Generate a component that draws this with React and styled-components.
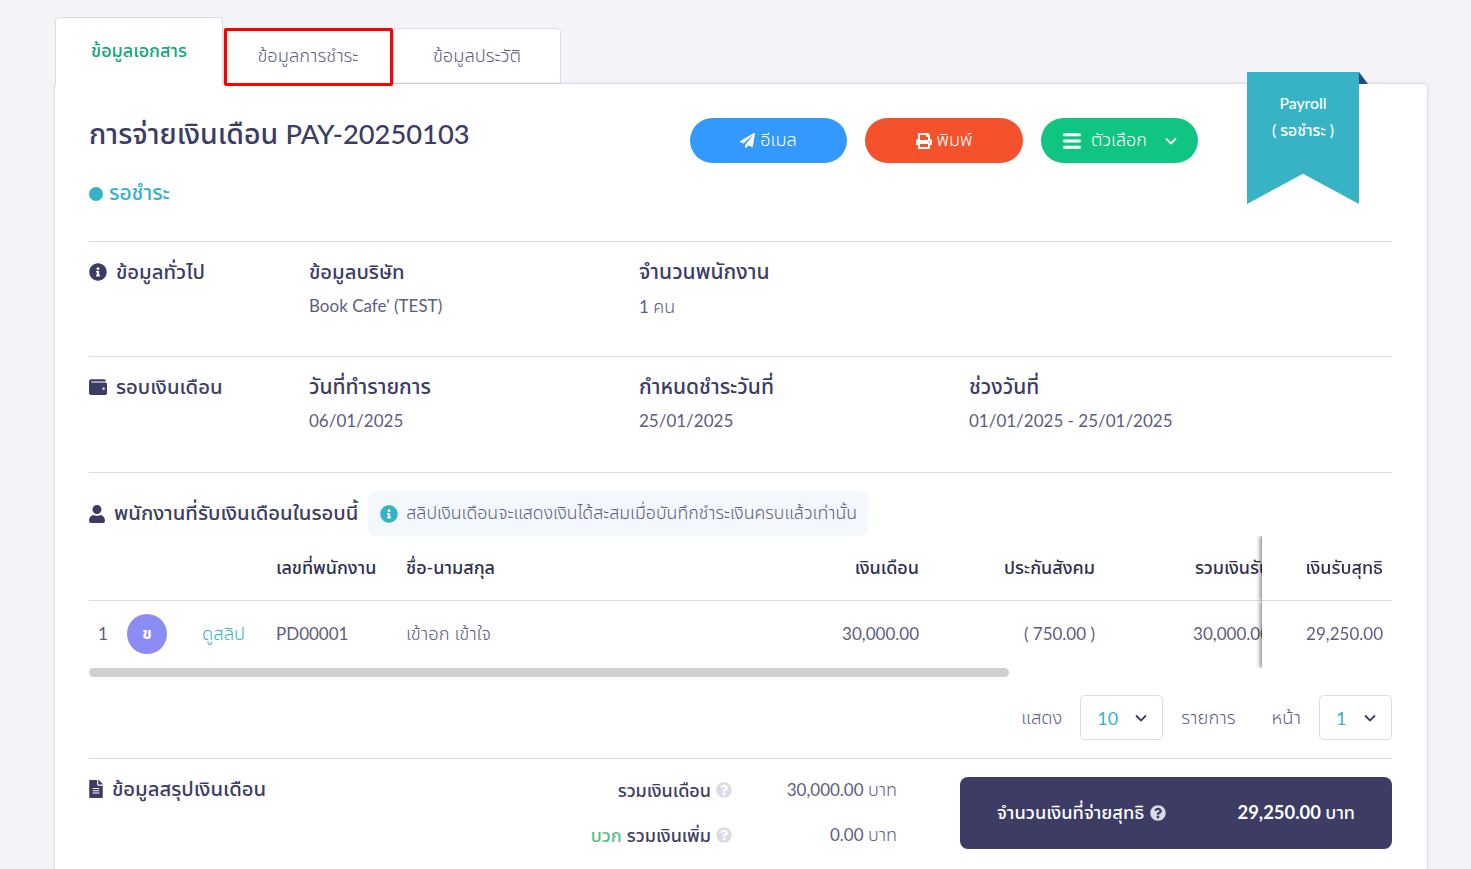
import React from "react";
import styled, { createGlobalStyle } from "styled-components";
import {
  FaPaperPlane,
  FaPrint,
  FaBars,
  FaInfoCircle,
  FaWallet,
  FaUser,
  FaFileAlt,
  FaQuestionCircle,
} from "react-icons/fa";

const navy = "#3c3c64";
const muted = "#5d5d80";
const teal = "#37b3c5";
const line = "#dcdce8";

const GlobalStyle = createGlobalStyle`
  html, body {
    margin: 0;
    height: 100%;
    overflow: hidden;
    background: #f3f3f8;
    font-family: "Lato", "Noto Sans Thai", "Noto Sans", sans-serif;
    color: ${navy};
  }
  * { box-sizing: border-box; }
`;

const Page = styled.div`
  height: 869px;
  overflow: hidden;
  padding: 17px 44px 0 55px;
`;

const Tabs = styled.div`
  display: flex;
  align-items: flex-end;
  height: 67px;
`;

const Tab = styled.div`
  display: flex;
  justify-content: center;
  align-items: ${(p) => (p.$active ? "flex-start" : "center")};
  width: ${(p) => p.$width}px;
  height: ${(p) => (p.$active ? 68 : 56)}px;
  padding-top: ${(p) => (p.$active ? 20 : 0)}px;
  margin-bottom: ${(p) => (p.$active ? -1 : 0)}px;
  position: relative;
  z-index: ${(p) => (p.$active || p.$marked ? 2 : 0)};
  background: #fff;
  border: 1px solid ${line};
  border-bottom: ${(p) => (p.$active ? "none" : `1px solid ${line}`)};
  border-radius: 4px 4px 0 0;
  font-size: ${(p) => (p.$active ? 18 : 18.3)}px;
  font-weight: ${(p) => (p.$active ? 500 : 300)};
  color: ${(p) => (p.$active ? "#12a67c" : muted)};
`;

const Marker = styled.div`
  position: absolute;
  inset: -1px -1px -3px 0;
  border: 3px solid #fa0000;
  border-radius: 2px;
`;

const Card = styled.div`
  position: relative;
  background: #fff;
  border-radius: 4px;
  box-shadow: 0 0 3px rgba(60, 60, 100, 0.3);
  padding: 32px 35px 0 34px;
  min-height: 800px;
`;

const Ribbon = styled.div`
  position: absolute;
  top: -12px;
  right: 68px;
  width: 112px;
  height: 132px;
  padding-top: 17px;
  background: ${teal};
  clip-path: polygon(0 0, 100% 0, 100% 100%, 50% 77%, 0 100%);
  color: #fff;
  font-size: 15.75px;
  font-weight: 500;
  text-align: center;
  line-height: 27px;
`;

const RibbonFold = styled.div`
  position: absolute;
  top: -12px;
  right: 59px;
  width: 0;
  height: 0;
  border-bottom: 12px solid #1d4e89;
  border-right: 9px solid transparent;
`;

const Header = styled.div`
  display: flex;
  justify-content: space-between;
  align-items: flex-start;
  height: 126px;
  border-bottom: 1px solid ${line};
`;

const Title = styled.h1`
  margin: -1px 0 0;
  font-size: 28.5px;
  line-height: 36px;
  font-weight: 500;
  color: ${navy};
`;

const TitleCode = styled.span`
  font-size: 27.3px;
`;

const Status = styled.div`
  display: flex;
  align-items: center;
  gap: 6px;
  margin-top: 26px;
  font-size: 21px;
  font-weight: 500;
  color: ${teal};
`;

const Dot = styled.span`
  width: 14px;
  height: 14px;
  border-radius: 50%;
  background: ${teal};
`;

const Actions = styled.div`
  display: flex;
  gap: 18px;
  margin: 2px 194px 0 0;
`;

const ActionButton = styled.button`
  display: flex;
  align-items: center;
  justify-content: center;
  gap: ${(p) => p.$gap || 5}px;
  width: ${(p) => p.$width || 157}px;
  height: 45px;
  border: 0;
  border-radius: 23px;
  background: ${(p) => p.$bg};
  color: #fff;
  font: inherit;
  font-size: 18px;
  font-weight: 300;
`;

const ButtonChevron = styled.span`
  display: flex;
  margin-left: 9px;
`;

const SectionTitle = styled.div`
  display: flex;
  align-items: center;
  gap: 9px;
  height: 28px;
  font-size: 20.3px;
  font-weight: 500;
  white-space: nowrap;

  svg {
    width: ${(p) => p.$iconWidth || 18}px;
    flex: none;
  }
`;

const Section = styled.div`
  display: grid;
  grid-template-columns: 220px 330px 330px 1fr;
  height: ${(p) => p.$height}px;
  padding-top: 16px;
  border-bottom: 1px solid ${line};
`;

const FieldLabel = styled.div`
  height: 28px;
  line-height: 26px;
  font-size: ${(p) => p.$size || 21}px;
  font-weight: 500;
`;

const FieldValue = styled.div`
  margin-top: 7px;
  font-size: 17px;
  line-height: 26px;
  color: ${muted};
`;

const Unit = styled.span`
  font-size: 18px;
  font-weight: ${(p) => p.$weight || 300};
`;

const EmployeeHead = styled.div`
  display: flex;
  align-items: center;
  gap: 10px;
  margin-top: 18px;
`;

const Notice = styled.div`
  display: flex;
  align-items: center;
  gap: 8px;
  height: 45px;
  width: 500px;
  padding-left: 12px;
  border-radius: 8px;
  background: #f2f8fc;
  font-size: 17.75px;
  font-weight: 300;
  color: ${muted};
  white-space: nowrap;
`;

const TableScroll = styled.div`
  overflow: hidden;
`;

const Table = styled.table`
  width: 1845px;
  table-layout: fixed;
  border-collapse: separate;
  border-spacing: 0;
`;

const Th = styled.th`
  height: 65px;
  padding: 0 9px;
  border-bottom: 1px solid ${line};
  font-weight: 500;
  font-size: 18px;
  color: #2f2f50;
  background: #fff;
  white-space: nowrap;
  overflow: hidden;
  text-align: ${(p) => (p.$right ? "right" : "left")};
`;

const Td = styled.td`
  height: 67px;
  padding: 0 9px 2px;
  font-size: ${(p) => (p.$thai ? 18.4 : 17)}px;
  font-weight: ${(p) => (p.$thai ? 300 : 400)};
  color: ${muted};
  background: #fff;
  white-space: nowrap;
  overflow: hidden;
  text-align: ${(p) => (p.$right ? "right" : "left")};
`;

const StickyTh = styled(Th)`
  position: sticky;
  right: 0;
  box-shadow: -2px 0 4px rgba(0, 0, 0, 0.45);
  clip-path: inset(0 0 0 -8px);
`;

const StickyTd = styled(Td)`
  position: sticky;
  right: 0;
  box-shadow: -2px 0 4px rgba(0, 0, 0, 0.45);
  clip-path: inset(0 0 0 -8px);
`;

const Avatar = styled.div`
  display: flex;
  align-items: center;
  justify-content: center;
  width: 40px;
  height: 40px;
  border-radius: 50%;
  background: #8c8cf5;
  color: #fff;
  font-size: 16px;
  font-weight: 700;
`;

const SlipLink = styled.a`
  color: ${teal};
`;

const ScrollTrack = styled.div`
  height: 9px;
`;

const ScrollThumb = styled.div`
  width: 920px;
  height: 9px;
  border-radius: 5px;
  background: #cfcfcf;
`;

const Pagination = styled.div`
  display: flex;
  justify-content: flex-end;
  align-items: center;
  margin-top: 18px;
  padding-bottom: 18px;
  border-bottom: 1px solid ${line};
  font-size: 18.4px;
  font-weight: 300;
  color: ${muted};
`;

const PageLabel = styled.span`
  margin-left: ${(p) => p.$left || 0}px;
`;

const Select = styled.div`
  display: flex;
  justify-content: space-between;
  align-items: center;
  width: ${(p) => p.$width}px;
  height: 45px;
  margin: 0 ${(p) => p.$after}px 0 18px;
  padding: 0 15px 0 16px;
  border: 1px solid ${line};
  border-radius: 5px;
  color: ${teal};
  font-size: 18px;
  font-weight: 400;
`;

const SelectChevron = styled.span`
  display: flex;
  color: ${navy};
`;

const Summary = styled.div`
  display: grid;
  grid-template-columns: 1fr 432px;
  margin-top: 18px;
`;

const SummaryLeft = styled.div`
  display: flex;
  justify-content: space-between;
  margin-top: -1px;

  > ${SectionTitle} {
    margin-top: -1px;
  }
`;

const SummaryRows = styled.div`
  display: flex;
  flex-direction: column;
  gap: 19px;
  width: 480px;
  padding-right: 63px;
`;

const SummaryRow = styled.div`
  display: grid;
  grid-template-columns: 1fr 165px;
  height: 26px;
  line-height: 26px;
`;

const SummaryLabel = styled.div`
  display: flex;
  justify-content: flex-end;
  align-items: center;
  gap: 5px;
  font-size: 18px;
  font-weight: 500;
`;

const Plus = styled.span`
  color: #5bbb85;
`;

const SummaryValue = styled.div`
  text-align: right;
  font-size: 17px;
  color: ${muted};
`;

const NetBox = styled.div`
  display: flex;
  justify-content: space-between;
  align-items: center;
  height: 72px;
  padding: 0 37px;
  border-radius: 8px;
  background: ${navy};
  color: #fff;
  font-size: 18.25px;
  font-weight: 500;
`;

const NetLabel = styled.div`
  display: flex;
  align-items: center;
  gap: 6px;
`;

const NetValue = styled.div`
  font-size: 18.4px;
  font-weight: 700;
`;

const Chevron = () => (
  <svg width="12" height="8" viewBox="0 0 12 8" fill="none" stroke="currentColor" strokeWidth="1.8">
    <path d="M1 1.5 L6 6.5 L11 1.5" />
  </svg>
);

export default function App() {
  return (
    <Page>
      <GlobalStyle />
      <Tabs>
        <Tab $active $width={168}>ข้อมูลเอกสาร</Tab>
        <Tab $marked $width={170}>
          ข้อมูลการชำระ
          <Marker />
        </Tab>
        <Tab $width={168}>ข้อมูลประวัติ</Tab>
      </Tabs>
      <Card>
        <RibbonFold />
        <Ribbon>
          Payroll
          <br />( รอชำระ )
        </Ribbon>
        <Header>
          <div>
            <Title>
              การจ่ายเงินเดือน <TitleCode>PAY-20250103</TitleCode>
            </Title>
            <Status>
              <Dot />
              รอชำระ
            </Status>
          </div>
          <Actions>
            <ActionButton $bg="#3399ff">
              <FaPaperPlane size={15} />
              อีเมล
            </ActionButton>
            <ActionButton $bg="#f4522d" $width={158}>
              <FaPrint size={16} />
              พิมพ์
            </ActionButton>
            <ActionButton $bg="#10c482" $gap={9}>
              <FaBars size={20} />
              ตัวเลือก
              <ButtonChevron>
                <Chevron />
              </ButtonChevron>
            </ActionButton>
          </Actions>
        </Header>

        <Section $height={115}>
          <SectionTitle>
            <FaInfoCircle size={18} />
            ข้อมูลทั่วไป
          </SectionTitle>
          <div>
            <FieldLabel $size={20.25}>ข้อมูลบริษัท</FieldLabel>
            <FieldValue>Book Cafe' (TEST)</FieldValue>
          </div>
          <div>
            <FieldLabel>จำนวนพนักงาน</FieldLabel>
            <FieldValue>
              1 <Unit>คน</Unit>
            </FieldValue>
          </div>
        </Section>

        <Section $height={116}>
          <SectionTitle>
            <FaWallet size={18} />
            รอบเงินเดือน
          </SectionTitle>
          <div>
            <FieldLabel>วันที่ทำรายการ</FieldLabel>
            <FieldValue>06/01/2025</FieldValue>
          </div>
          <div>
            <FieldLabel>กำหนดชำระวันที่</FieldLabel>
            <FieldValue>25/01/2025</FieldValue>
          </div>
          <div>
            <FieldLabel>ช่วงวันที่</FieldLabel>
            <FieldValue>01/01/2025 - 25/01/2025</FieldValue>
          </div>
        </Section>

        <EmployeeHead>
          <SectionTitle $iconWidth={16}>
            <FaUser size={18} />
            พนักงานที่รับเงินเดือนในรอบนี้
          </SectionTitle>
          <Notice>
            <FaInfoCircle size={18} color={teal} />
            สลิปเงินเดือนจะแสดงเงินได้สะสมเมื่อบันทึกชำระเงินครบแล้วเท่านั้น
          </Notice>
        </EmployeeHead>

        <TableScroll>
          <Table>
            <colgroup>
              <col width="29" />
              <col width="75" />
              <col width="74" />
              <col width="130" />
              <col width="400" />
              <col width="131" />
              <col width="176" />
              <col width="175" />
              <col width="525" />
              <col width="130" />
            </colgroup>
            <thead>
              <tr>
                <Th />
                <Th />
                <Th />
                <Th>เลขที่พนักงาน</Th>
                <Th>ชื่อ-นามสกุล</Th>
                <Th $right>เงินเดือน</Th>
                <Th $right>ประกันสังคม</Th>
                <Th $right>รวมเงินรับ</Th>
                <Th />
                <StickyTh $right>เงินรับสุทธิ</StickyTh>
              </tr>
            </thead>
            <tbody>
              <tr>
                <Td>1</Td>
                <Td>
                  <Avatar>ข</Avatar>
                </Td>
                <Td $thai>
                  <SlipLink>ดูสลิป</SlipLink>
                </Td>
                <Td>PD00001</Td>
                <Td $thai>เข้าอก เข้าใจ</Td>
                <Td $right>30,000.00</Td>
                <Td $right>( 750.00 )</Td>
                <Td $right>30,000.00</Td>
                <Td />
                <StickyTd $right>29,250.00</StickyTd>
              </tr>
            </tbody>
          </Table>
        </TableScroll>
        <ScrollTrack>
          <ScrollThumb />
        </ScrollTrack>

        <Pagination>
          แสดง
          <Select $width={83} $after={18}>
            10
            <SelectChevron>
              <Chevron />
            </SelectChevron>
          </Select>
          รายการ
          <PageLabel $left={36}>หน้า</PageLabel>
          <Select $width={73} $after={0}>
            1
            <SelectChevron>
              <Chevron />
            </SelectChevron>
          </Select>
        </Pagination>

        <Summary>
          <SummaryLeft>
            <SectionTitle $iconWidth={14}>
              <FaFileAlt size={18} />
              ข้อมูลสรุปเงินเดือน
            </SectionTitle>
            <SummaryRows>
              <SummaryRow>
                <SummaryLabel>
                  รวมเงินเดือน
                  <FaQuestionCircle size={16} color={line} />
                </SummaryLabel>
                <SummaryValue>
                  30,000.00 <Unit>บาท</Unit>
                </SummaryValue>
              </SummaryRow>
              <SummaryRow>
                <SummaryLabel>
                  <Plus>บวก</Plus>
                  รวมเงินเพิ่ม
                  <FaQuestionCircle size={16} color={line} />
                </SummaryLabel>
                <SummaryValue>
                  0.00 <Unit>บาท</Unit>
                </SummaryValue>
              </SummaryRow>
            </SummaryRows>
          </SummaryLeft>
          <NetBox>
            <NetLabel>
              จำนวนเงินที่จ่ายสุทธิ
              <FaQuestionCircle size={16} color={line} />
            </NetLabel>
            <NetValue>
              29,250.00 <Unit $weight={500}>บาท</Unit>
            </NetValue>
          </NetBox>
        </Summary>
      </Card>
    </Page>
  );
}
